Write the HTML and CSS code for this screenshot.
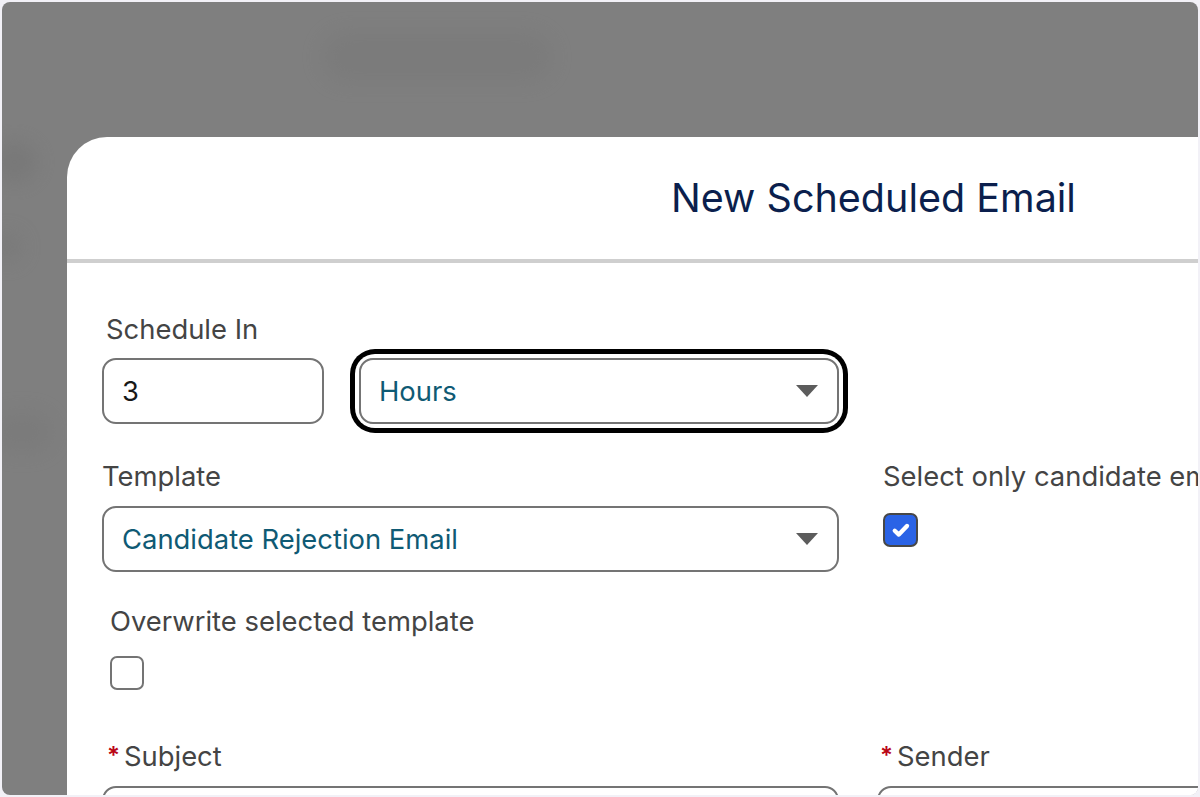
FILE: index.html
```html
<!DOCTYPE html>
<html lang="en">
<head>
<meta charset="utf-8">
<title>New Scheduled Email</title>
<link rel="stylesheet" href="styles.css">
</head>
<body>
<div class="screen">
  <div class="backdrop" aria-hidden="true">
    <div class="blob blob-search"></div>
    <div class="blob blob-left1"></div>
    <div class="blob blob-left2"></div>
    <div class="blob blob-left3"></div>
  </div>
  <section class="modal">
    <header class="modal-header">
      <h2 class="modal-title">New Scheduled Email</h2>
    </header>
    <div class="modal-body">
      <div class="form-grid">
        <div class="field">
          <label class="label">Schedule In</label>
          <div class="schedule-row">
            <div class="input input-number">3</div>
            <div class="focus-ring">
              <div class="input select select-hours">
                <span class="value">Hours</span>
                <span class="caret"></span>
              </div>
            </div>
          </div>
        </div>
        <div></div>

        <div class="field field-template">
          <label class="label">Template</label>
          <div class="input select">
            <span class="value">Candidate Rejection Email</span>
            <span class="caret"></span>
          </div>
        </div>
        <div class="field field-right field-template">
          <label class="label">Select only candidate emails</label>
          <span class="checkbox checked">
            <svg viewBox="0 0 20 20" width="24" height="24"><path d="M4.8 10.6 L8.2 13.8 L15 6.6" fill="none" stroke="#fff" stroke-width="3.6" stroke-linecap="round" stroke-linejoin="round"/></svg>
          </span>
        </div>

        <div class="field field-overwrite">
          <label class="label">Overwrite selected template</label>
          <span class="checkbox"></span>
        </div>
        <div></div>

        <div class="field field-subject">
          <label class="label req-label"><abbr class="req">*</abbr>Subject</label>
          <div class="input"></div>
        </div>
        <div class="field field-sender">
          <label class="label req-label"><abbr class="req">*</abbr>Sender</label>
          <div class="input"></div>
        </div>
      </div>
    </div>
  </section>
</div>
</body>
</html>
```

FILE: styles.css
```css
* { box-sizing: border-box; }

html, body {
  margin: 0;
  padding: 0;
  height: 100%;
}

body {
  background: #f2f1f7;
  font-family: "Inter", "Liberation Sans", sans-serif;
  overflow: hidden;
}

.screen {
  position: relative;
  margin: 2px;
  width: 1196px;
  height: 793px;
  border-radius: 8px;
  background: #7f7f7f;
  overflow: hidden;
  padding: 135px 0 0 65px;
}

.backdrop {
  position: absolute;
  inset: 0;
  pointer-events: none;
}

.blob {
  position: absolute;
  background: #747474;
  filter: blur(10px);
  border-radius: 30px;
  opacity: 0.6;
}
.blob-search { left: 320px; top: 30px; width: 230px; height: 50px; opacity: 0.35; }
.blob-left1 { left: -10px; top: 140px; width: 45px; height: 40px; }
.blob-left2 { left: -10px; top: 230px; width: 30px; height: 30px; opacity: 0.4; }
.blob-left3 { left: -10px; top: 410px; width: 60px; height: 40px; opacity: 0.35; }

.modal {
  position: relative;
  width: 1613px;
  height: 700px;
  background: #ffffff;
  border-top-left-radius: 40px;
  border-top-right-radius: 40px;
}

.modal-header {
  height: 126px;
  border-bottom: 4px solid #cfcfcf;
  display: flex;
  align-items: center;
  justify-content: center;
}

.modal-title {
  margin: 0;
  font-weight: 400;
  font-size: 39.5px;
  color: #0b1f4d;
}

.modal-body {
  padding: 51px 0 0 35px;
}

.form-grid {
  display: grid;
  grid-template-columns: 737px 1fr;
  column-gap: 38px;
}

.field {
  display: flex;
  flex-direction: column;
  align-items: flex-start;
}

.label {
  font-size: 27.4px;
  line-height: 30px;
  color: #444444;
  margin: 0 0 14px 4px;
  white-space: nowrap;
}

.schedule-row {
  display: flex;
  align-items: center;
  gap: 35px;
}

.input {
  height: 66px;
  border: 2px solid #747474;
  border-radius: 14px;
  background: #fff;
  padding: 0 18px;
  display: flex;
  align-items: center;
  font-size: 27.4px;
  color: #181818;
  width: 100%;
}

.input-number {
  width: 222px;
}

.focus-ring {
  border-radius: 16px;
  box-shadow: 0 0 0 4px #ffffff, 0 0 0 9px #000000;
}

.select-hours {
  width: 480px;
}

.select {
  justify-content: space-between;
}

.value {
  color: #0f5a74;
}

.caret {
  width: 0;
  height: 0;
  border-left: 11px solid transparent;
  border-right: 11px solid transparent;
  border-top: 12px solid #5c5c5c;
  margin-right: 1px;
}

.field-template {
  margin-top: 37px;
}
.field-template .label {
  margin-left: 0;
  margin-bottom: 15px;
}

.field-right {
  padding-left: 6px;
}
.field-right .label {
  margin-bottom: 22px;
}

.checkbox {
  width: 34px;
  height: 34px;
  border: 2px solid #747474;
  border-radius: 7px;
  background: #fff;
  display: flex;
  align-items: center;
  justify-content: center;
}

.checkbox.checked {
  background: #2a63e6;
  border-color: #474747;
  width: 35px;
  height: 34px;
}

.field-overwrite {
  margin-top: 34px;
  padding-left: 8px;
}
.field-overwrite .label {
  margin-left: 0;
  margin-bottom: 20px;
}

.field-subject,
.field-sender {
  margin-top: 51px;
}
.field-subject .label {
  margin-left: 5px;
  margin-bottom: 15px;
}
.field-sender .label {
  margin-left: 3px;
  margin-bottom: 15px;
}

.req {
  color: #ba0517;
  text-decoration: none;
  font-size: 24px;
  font-weight: 600;
  margin-right: 4px;
  vertical-align: 2px;
}
```
